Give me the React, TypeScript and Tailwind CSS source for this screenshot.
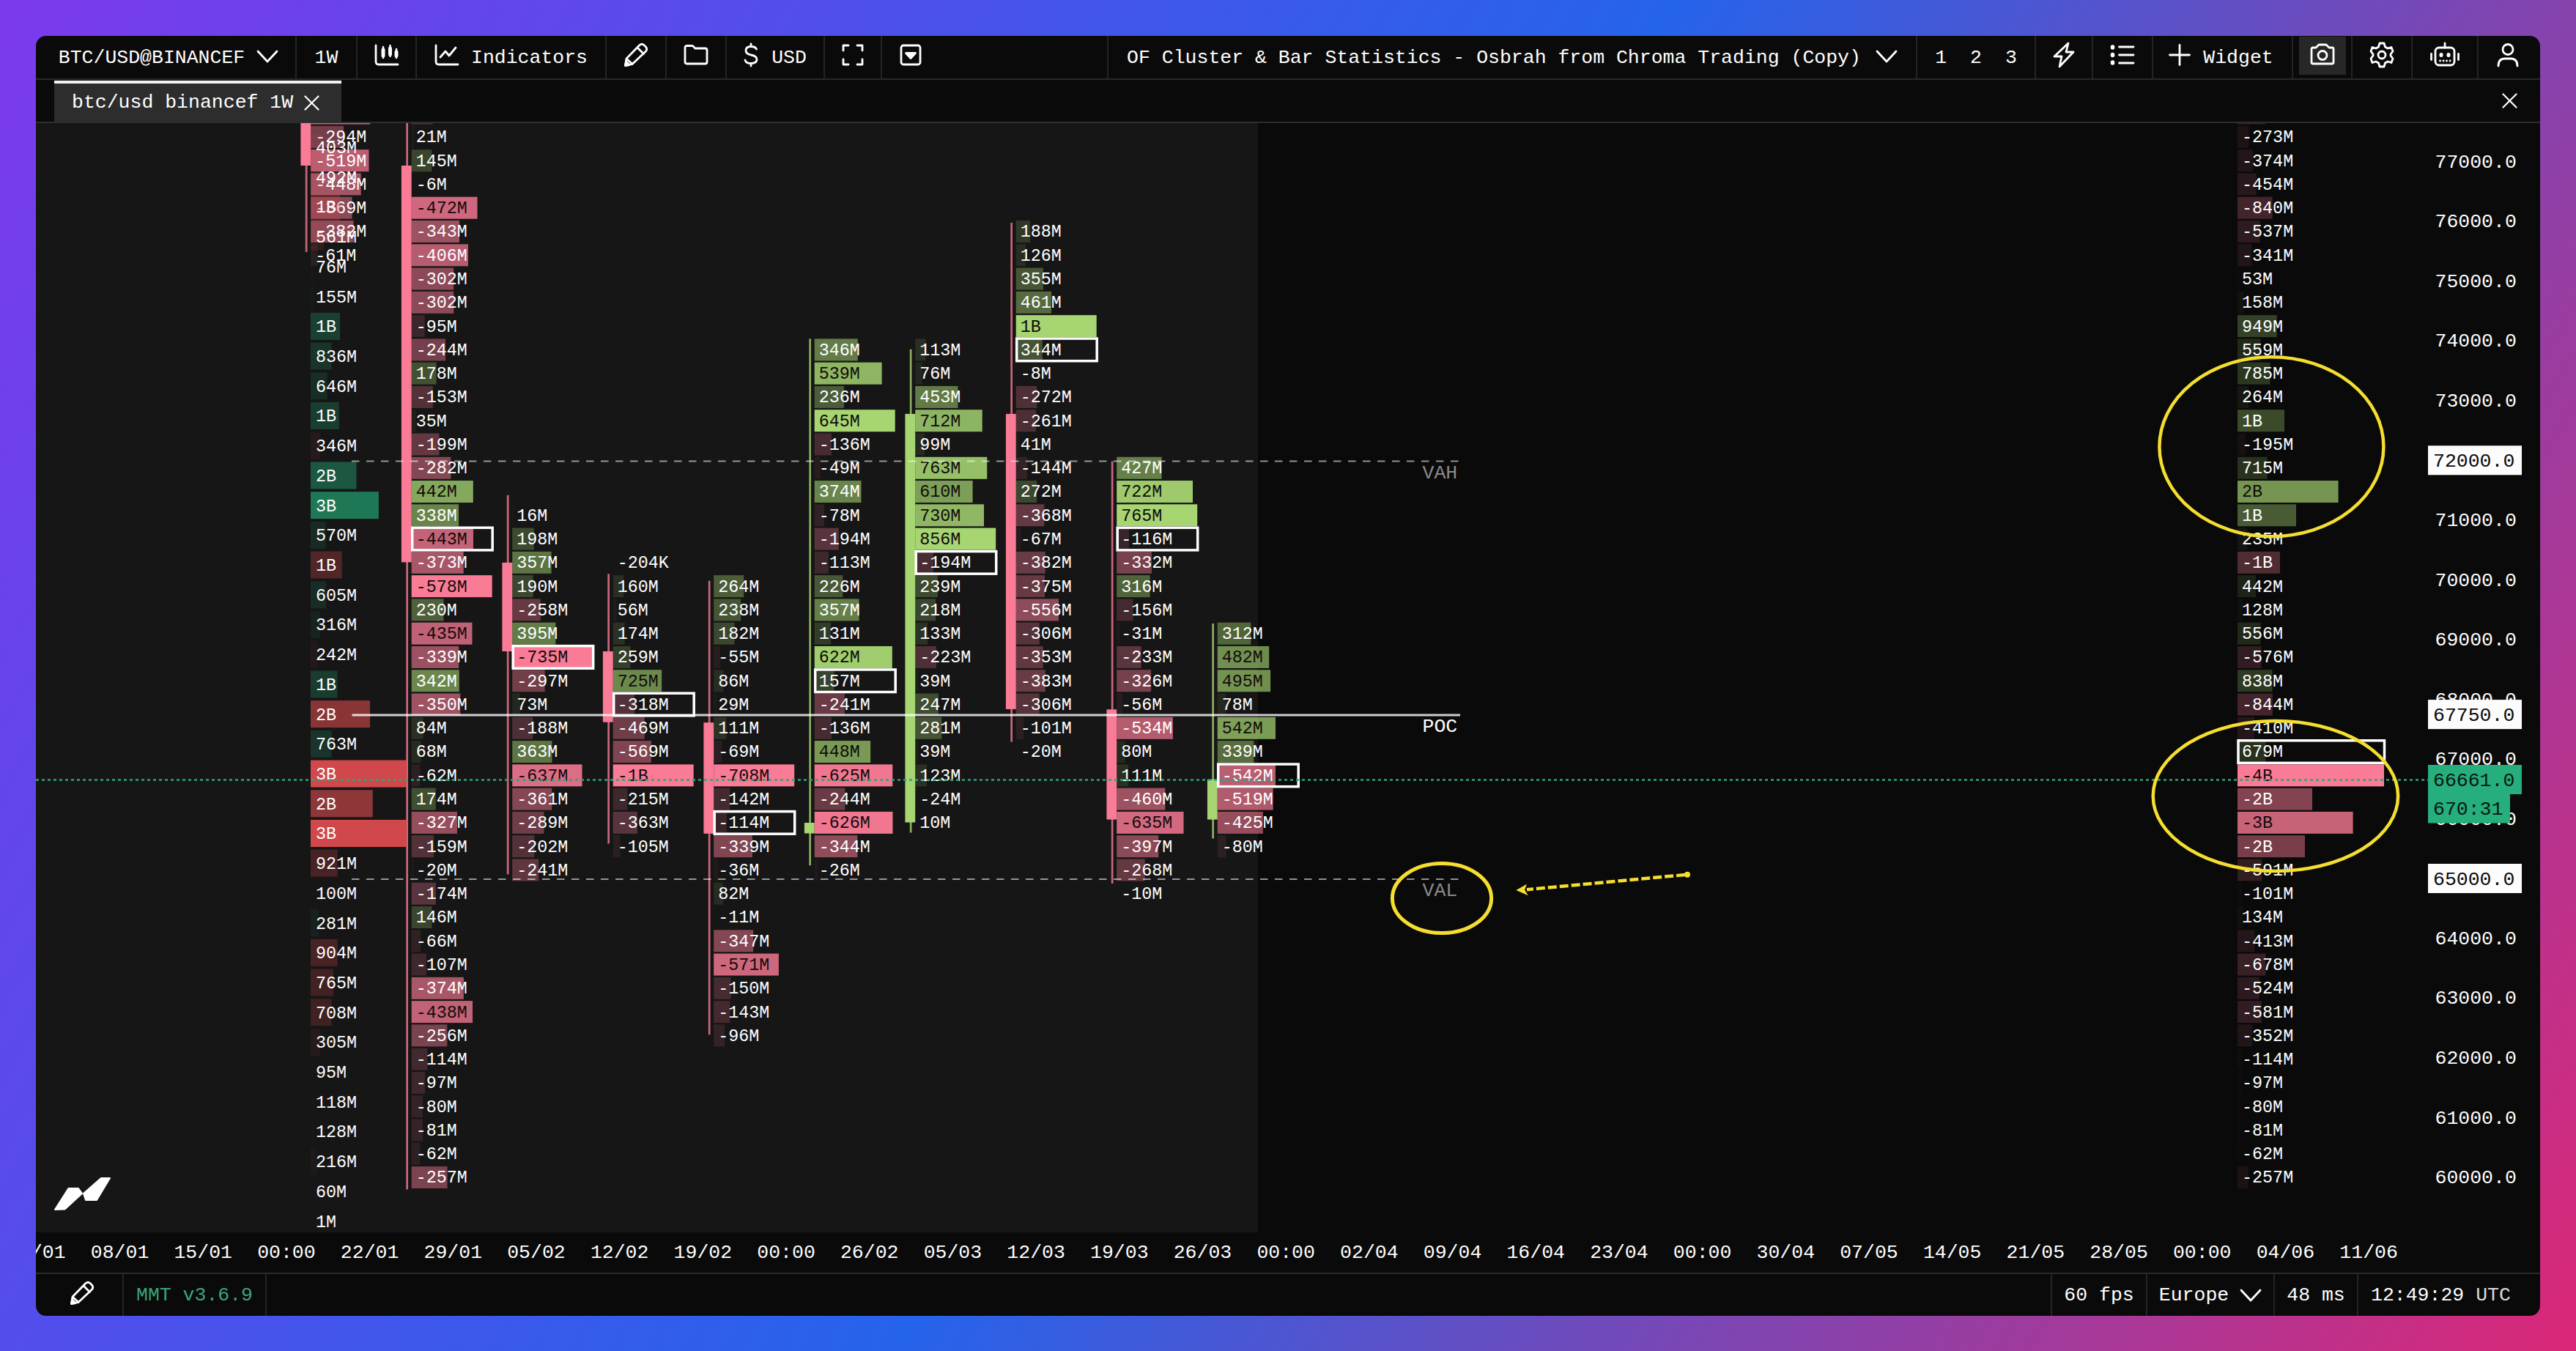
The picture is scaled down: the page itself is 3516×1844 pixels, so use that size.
import type { ReactNode } from 'react'
import clsx from 'clsx'

type Row = [label: string, ratio: number]

interface Cluster {
  x: number
  start: number
  max: number
  poc?: number
  width?: number
  bull?: boolean
  body?: [number, number]
  wick?: [number, number]
  values: string
}

const CHART_TOP = 168
const ROW_HEIGHT = 32.276
const FIRST_ROW = 186.8
const PINK = '#f97b95'
const GREEN = '#a6d572'

const CLUSTERS: Cluster[] = [
  {
    x: 424.2, start: -1, max: 720, body: [150, 226], wick: [150, 344],
    values: '-530M -294M -519M -448M -369M -382M -61M',
  },
  {
    x: 561.7, start: -1, max: 578, poc: 17, body: [226, 767.4], wick: [150, 1623.5],
    values:
      '-152M 21M 145M -6M -472M -343M -406M -302M -302M -95M -244M 178M -153M 35M -199M -282M 442M 338M -443M -373M -578M 230M -435M -339M 342M -350M 84M 68M -62M 174M -327M -159M -20M -174M 146M -66M -107M -374M -438M -256M -114M -97M -80M -81M -62M -257M',
  },
  {
    x: 699.2, start: 16, max: 735, poc: 22, body: [767.9, 889], wick: [675.8, 1193.4],
    values: '16M 198M 357M 190M -258M 395M -735M -297M 73M -188M 363M -637M -361M -289M -202M -241M',
  },
  {
    x: 836.7, start: 18, max: 1200, poc: 24, body: [889, 985.7], wick: [783.4, 1151.5],
    values: '-204K 160M 56M 174M 259M 725M -318M -469M -569M -1B:1 -215M -363M -105M',
  },
  {
    x: 974.2, start: 19, max: 708, poc: 29, body: [986.2, 1137.8], wick: [792.6, 1412.2],
    values:
      '264M 238M 182M -55M 86M 29M 111M -69M -708M -142M -114M -339M -36M 82M -11M -347M -571M -150M -143M -96M',
  },
  {
    x: 1111.7, start: 9, max: 645, poc: 23, bull: true, body: [1123, 1137.5], wick: [462.4, 1181.2],
    values:
      '346M 539M 236M 645M -136M -49M 374M -78M -194M -113M 226M 357M 131M 622M 157M -241M -136M 448M -625M -244M -626M -344M -26M',
  },
  {
    x: 1249.2, start: 9, max: 856, poc: 18, bull: true, body: [564.9, 1122.5], wick: [476.8, 1136.5],
    values:
      '113M 76M 453M 712M 99M 763M 610M 730M 856M -194M 239M 218M 133M -223M 39M 247M 281M 39M 123M -24M 10M',
  },
  {
    x: 1386.7, start: 4, max: 1050, poc: 9, body: [564.9, 967.9], wick: [304, 1012.6],
    values:
      '188M 126M 355M 461M 1B:1 344M -8M -272M -261M 41M -144M 272M -368M -67M -382M -375M -556M -306M -353M -383M -306M -101M -20M',
  },
  {
    x: 1524.2, start: 14, max: 765, poc: 17, body: [968.3, 1118.6], wick: [629.5, 1206],
    values:
      '427M 722M 765M -116M -332M 316M -156M -31M -233M -326M -56M -534M 80M 111M -460M -635M -397M -268M -10M',
  },
  {
    x: 1661.7, start: 21, max: 752, poc: 27, bull: true, body: [1063.9, 1118.6], wick: [851, 1144.5],
    values: '312M 482M 495M 78M 542M 339M -542M -519M -425M -80M',
  },
  {
    x: 3054, start: -1, max: 3530, poc: 26, width: 200,
    values:
      '-670M -273M -374M -454M -840M -537M -341M 53M 158M 949M 559M 785M 264M 1B:0.32 -195M 715M 2B:0.688 1B:0.4 235M -1B:0.29 442M 128M 556M -576M 838M -844M -410M 679M -4B:1 -2B:0.51 -3B:0.788 -2B:0.46 -591M -101M 134M -413M -678M -524M -581M -352M -114M -97M -80M -81M -62M -257M',
  },
]

// label, bar width, rising
const PROFILE: [string, number, boolean][] = [
  ['403M', 16, false], ['492M', 18, false], ['1B', 40, false], ['561M', 18, false], ['76M', 3, true],
  ['155M', 4, true], ['1B', 40, true], ['836M', 28.5, true], ['646M', 22.5, true], ['1B', 38.7, true],
  ['346M', 13.4, false], ['2B', 62.5, true], ['3B', 92.9, true], ['570M', 20.5, true], ['1B', 42.7, false],
  ['605M', 21, true], ['316M', 13, true], ['242M', 9, false], ['1B', 36.5, true], ['2B', 81, false],
  ['763M', 28.6, true], ['3B', 131, false], ['2B', 84.7, false], ['3B', 131, false], ['921M', 36.7, false],
  ['100M', 2, false], ['281M', 11, true], ['904M', 36.7, false], ['765M', 31, false], ['708M', 28.6, false],
  ['305M', 12.8, false], ['95M', 3, false], ['118M', 3, false], ['128M', 3, false], ['216M', 8, false],
  ['60M', 1, false], ['1M', 0, false],
]

const DATES = [
  '01/01', '08/01', '15/01', '00:00', '22/01', '29/01', '05/02', '12/02', '19/02', '00:00', '26/02',
  '05/03', '12/03', '19/03', '26/03', '00:00', '02/04', '09/04', '16/04', '23/04', '00:00', '30/04',
  '07/05', '14/05', '21/05', '28/05', '00:00', '04/06', '11/06',
]

function parseRow(raw: string, max: number): Row {
  const [label, ratio] = raw.split(':')
  if (ratio) return [label, Number(ratio)]
  const scale = label.endsWith('K') ? 0.001 : 1
  return [label, Math.min(1, (Math.abs(parseFloat(label)) * scale) / max)]
}

function ClusterColumn({ cluster }: { cluster: Cluster }) {
  const { x, start, max, poc, width = 110, bull, body, wick, values } = cluster
  const candle = bull ? GREEN : PINK

  return (
    <g>
      {wick && (
        <rect x={x - 7.4} y={wick[0]} width={2.7} height={wick[1] - wick[0]} fill={candle} opacity={0.8} />
      )}
      {body && <rect x={x - 13.8} y={body[0]} width={13.8} height={body[1] - body[0]} fill={candle} />}
      {values.split(' ').map((raw, i) => {
        const [label, ratio] = parseRow(raw, max)
        const y = FIRST_ROW + (start + i) * ROW_HEIGHT
        const negative = label.startsWith('-')
        const dark = ratio > (negative ? 0.74 : 0.6)
        return (
          <g key={i}>
            <rect
              x={x}
              y={y - 14.9}
              width={width * ratio}
              height={30}
              fill={negative ? PINK : GREEN}
              opacity={ratio}
            />
            {y > CHART_TOP && (
              <text x={x + 6} y={y + 7.5} className={dark ? 'fill-[#120b0c]' : 'fill-white'}>
                {label}
              </text>
            )}
          </g>
        )
      })}
      {poc !== undefined && (
        <rect
          x={x + 1}
          y={FIRST_ROW + poc * ROW_HEIGHT - 15.2}
          width={width - 0.5}
          height={30.6}
          className="fill-none stroke-white stroke-[3.5]"
        />
      )}
    </g>
  )
}

function VolumeProfile() {
  return (
    <g>
      {PROFILE.map(([label, width, up], i) => {
        const y = 404.8 + (i - 5) * 40.71
        return (
          <g key={i}>
            <rect
              x={424}
              y={y - 18.6}
              width={width}
              height={37}
              fill={up ? '#23a070' : '#d0484b'}
              opacity={Math.min(1, width / 131)}
            />
            <text x={431} y={y + 7.8} className="fill-white">
              {label}
            </text>
          </g>
        )
      })}
    </g>
  )
}

function PriceTag({ y, label, live, width = 128 }: { y: number; label: string; live?: boolean; width?: number }) {
  return (
    <g>
      <rect x={3314} y={y - 20} width={width} height={40} className={live ? 'fill-[#27ae7d]' : 'fill-[#fcfcfc]'} />
      <text x={3321} y={y + 8.5} className={live ? 'fill-[#08170f]' : 'fill-[#0a0a0a]'}>
        {label}
      </text>
    </g>
  )
}

function Chart() {
  const prices = Array.from({ length: 18 }, (_, i) => 77000 - i * 1000)

  return (
    <svg
      viewBox="49 168 3418 1514"
      className="block h-[1514px] w-full shrink-0 text-[23.4px]"
      fontFamily="'Liberation Mono', monospace"
    >
      <rect x={49} y={CHART_TOP} width={1668} height={1514} className="fill-[#161616]" />
      {CLUSTERS.map((cluster) => (
        <ClusterColumn key={cluster.x} cluster={cluster} />
      ))}
      <VolumeProfile />

      {/* value area */}
      <path d="M480 629.5H1991M480 1200H1991" strokeDasharray="10.5 9.5" className="stroke-white/55 stroke-2" />
      <path d="M480.5 976H1993" className="stroke-white/80 stroke-3" />
      <g className="fill-[#8a8a8a] text-[26.5px]">
        <text x={1941.5} y={653}>VAH</text>
        <text x={1941.5} y={999} className="fill-white">POC</text>
        <text x={1941.5} y={1223}>VAL</text>
      </g>
      <path d="M49 1064.5H3314" strokeDasharray="4 4" className="stroke-[#2aa57b] stroke-[2.5]" />

      {/* price axis */}
      <g className="text-[26.5px]">
        {prices.map((price, i) => (
          <text key={price} x={3323.5} y={219.9 + i * 81.55 + 8.8} className="fill-white">
            {price}.0
          </text>
        ))}
        <PriceTag y={628.3} label="72000.0" />
        <PriceTag y={975.1} label="67750.0" />
        <PriceTag y={1199} label="65000.0" />
        <PriceTag y={1064} label="66661.0" live />
        <PriceTag y={1103.5} label="670:31" live width={112} />
      </g>

      {/* drawings */}
      <g className="fill-none stroke-[#f5de2f] stroke-[4.5]">
        <ellipse cx={3100.4} cy={609.7} rx={153} ry={122.5} />
        <ellipse cx={3105.9} cy={1086.5} rx={167.2} ry={102.5} />
        <ellipse cx={1968} cy={1226} rx={67.6} ry={47.6} className="stroke-5" />
        <path d="M2300 1194L2084 1214.2" strokeDasharray="12 4" />
        <circle cx={2303} cy={1193.7} r={4} className="fill-[#f5de2f] stroke-none" />
        <path d="M2069.3 1215L2084 1206.7L2081 1214.6L2085.7 1222.3Z" className="fill-[#f5de2f] stroke-none" />
      </g>

      {/* logo */}
      <path
        d="M75 1651L88.5 1650.5L112 1629L107 1622H93.5ZM138 1608H150L132 1638H117L114 1629Z"
        strokeLinejoin="round"
        className="fill-white stroke-white stroke-2"
      />
    </svg>
  )
}

function Icon({ w, h, className, children }: { w: number; h: number; className?: string; children: ReactNode }) {
  return (
    <svg
      width={w}
      height={h}
      viewBox={`0 0 ${w} ${h}`}
      fill="none"
      stroke="currentColor"
      strokeWidth={2.8}
      strokeLinecap="round"
      strokeLinejoin="round"
      className={clsx('shrink-0', className)}
    >
      {children}
    </svg>
  )
}

function Chevron() {
  return (
    <Icon w={30} h={18} className="mt-1">
      <path d="M2 2L15 16L28 2" />
    </Icon>
  )
}

function Pencil() {
  return (
    <Icon w={34} h={34}>
      <path d="M2.5 31.5L4 22L22 3.5Q25 1 28 3.5L30.5 6Q33 9 30.5 12L12 29.5ZM19 7L27.5 15.5M4 22L12 29.5" />
      <path d="M2.5 31.5L3.5 26L8 30.5Z" fill="currentColor" />
    </Icon>
  )
}

function Close() {
  return (
    <Icon w={21} h={21}>
      <path d="M1.5 1.5L19.5 19.5M19.5 1.5L1.5 19.5" strokeWidth={2.2} />
    </Icon>
  )
}

function Cell({ className, children }: { className?: string; children: ReactNode }) {
  return (
    <div className={clsx('flex h-full shrink-0 items-center justify-center border-r-2 border-[#242424]', className)}>
      {children}
    </div>
  )
}

function Toolbar() {
  return (
    <header className="flex h-[60px] shrink-0 border-b-2 border-[#2a2a2a]">
      <Cell className="w-[356px] gap-4 pb-1.5 pl-2">
        <span className="pt-2">BTC/USD@BINANCEF</span>
        <Chevron />
      </Cell>
      <Cell className="w-[83px] pb-1.5">
        <span className="pt-2">1W</span>
      </Cell>
      <Cell className="w-[81px] pb-1.5">
        <Icon w={34} h={30}>
          <path d="M2 2V24Q2 28 6 28H32" />
          <path d="M12 4V19M21.5 2V17M30 7V19" strokeWidth={2.5} />
          <path d="M12 8V16M21.5 6V14M30 11V16" strokeWidth={5} />
        </Icon>
      </Cell>
      <Cell className="w-[259px] gap-4 pb-1.5">
        <Icon w={34} h={30}>
          <path d="M2 2V24Q2 28 6 28H32M8 18L15 10L20 16L29 5" />
        </Icon>
        <span className="pt-2">Indicators</span>
      </Cell>
      <Cell className="w-[82px] pb-1.5">
        <Pencil />
      </Cell>
      <Cell className="w-[82px] pb-1.5">
        <Icon w={34} h={28}>
          <path d="M2 4Q2 1.5 4.5 1.5H11Q13 1.5 14 3L15.5 5H29.5Q32 5 32 7.500V23.5Q32 26 29.5 26H4.5Q2 26 2 23.5Z" />
        </Icon>
      </Cell>
      <Cell className="w-[134px] gap-[18px] pb-1.5">
        <Icon w={20} h={34}>
          <path d="M10 2V5.5M10 28.5V32M17.5 9Q16 5.5 10 5.5Q3 5.5 3 11Q3 15.5 10 17Q18 18.5 18 23Q18 28.5 10 28.5Q3 28.5 2 24" />
        </Icon>
        <span className="pt-2">USD</span>
      </Cell>
      <Cell className="w-[78px] pb-1.5">
        <Icon w={30} h={30}>
          <path d="M2 9V2H9M21 2H28V9M28 21V28H21M9 28H2V21" />
        </Icon>
      </Cell>
      <div className="flex items-center pb-1.5 pl-6">
        <Icon w={30} h={30}>
          <rect x={2} y={2} width={26} height={26} rx={3} />
          <path d="M8.5 12.5H21.5L15 19.5Z" fill="currentColor" />
        </Icon>
      </div>

      <div className="flex-1 border-r-2 border-[#242424]" />
      <Cell className="w-[1104px] gap-5 pb-1.5">
        <span className="pt-2">OF Cluster &amp; Bar Statistics - Osbrah from Chroma Trading (Copy)</span>
        <Chevron />
      </Cell>
      <Cell className="w-[162px] gap-8 pb-1.5">
        <span className="pt-2">1</span>
        <span className="pt-2">2</span>
        <span className="pt-2">3</span>
      </Cell>
      <Cell className="w-[78px] pb-1.5">
        <Icon w={30} h={36}>
          <path d="M21 2L2 20H12L9 34L28 14H18Z" />
        </Icon>
      </Cell>
      <Cell className="w-[82px] pb-1.5">
        <Icon w={34} h={28}>
          <path d="M12.5 3H32M12.5 14H32M12.5 25H32" />
          <path d="M3.5 3V4M3.5 13.5V14.5M3.5 24V25" strokeWidth={5.5} />
        </Icon>
      </Cell>
      <Cell className="w-[191px] gap-[17px] pr-1 pb-1.5">
        <Icon w={30} h={30}>
          <path d="M15 1.5V28.5M1.5 15H28.5" />
        </Icon>
        <span className="pt-2">Widget</span>
      </Cell>
      <Cell className="w-[81px] pb-1">
        <div className="flex h-[52px] w-16 items-center justify-center bg-[#272727] pb-1">
          <Icon w={34} h={30}>
            <path d="M2 8Q2 6 4 6H8L12 2H22L26 6H30Q32 6 32 8V26Q32 28 30 28H4Q2 28 2 26Z" />
            <circle cx={17} cy={16.5} r={6} />
          </Icon>
        </div>
      </Cell>
      <Cell className="w-[82px] pb-1.5">
        <Icon w={34} h={36}>
          <path d="M14 2H20L21.5 7L25 9L30 7.5L32 13L29 17L29 19L32 23L30 28.5L25 27L21.5 29L20 34H14L12.5 29L9 27L4 28.5L2 23L5 19V17L2 13L4 7.5L9 9L12.5 7Z" />
          <circle cx={17} cy={18} r={5} />
        </Icon>
      </Cell>
      <Cell className="w-[90px] pb-2">
        <Icon w={42} h={34}>
          <path d="M21 2V8M2.5 16.5V24.5M39.5 16.5V24.5" />
          <rect x={8} y={8} width={26} height={24} rx={5} />
          <path d="M16 17.5V18.5M26 17.5V18.5" strokeWidth={5} />
          <path d="M14.5 26H14.6M19 26H19.1M23.5 26H23.6M28 26H28.1" />
        </Icon>
      </Cell>
      <div className="flex w-[84px] items-center justify-center pr-1 pb-1.5">
        <Icon w={30} h={34}>
          <circle cx={15} cy={9.5} r={7} />
          <path d="M2 32Q2 22 11 22H19Q28 22 28 32" />
        </Icon>
      </div>
    </header>
  )
}

function TabBar() {
  return (
    <div className="flex h-[59px] shrink-0 items-start justify-between border-b-2 border-[#2e2e2e] pr-[31px] pl-[25px]">
      <div className="mt-px flex h-14 w-[392px] items-center gap-[15px] border-t-4 border-[#f2f2f2] bg-[#2d2d2d] pl-6">
        <span>btc/usd binancef 1W</span>
        <Close />
      </div>
      <div className="flex h-full items-center">
        <Close />
      </div>
    </div>
  )
}

function StatusBar() {
  return (
    <footer className="flex h-[59px] shrink-0 border-t-2 border-[#2a2a2a]">
      <Cell className="w-[120px] pb-1.5 pl-2">
        <Pencil />
      </Cell>
      <Cell className="w-[195px] text-[#3aa57c]">MMT v3.6.9</Cell>
      <div className="flex-1 border-r-2 border-[#242424]" />
      <Cell className="w-[130px]">60 fps</Cell>
      <Cell className="w-[174px] gap-[15px]">
        <span>Europe</span>
        <Icon w={30} h={18}>
          <path d="M2 2L15 16L28 2" />
        </Icon>
      </Cell>
      <Cell className="w-[114px]">48 ms</Cell>
      <div className="flex w-[248px] items-center pl-[17px]">
        <span>
          12:49:29 <span className="text-[#dcdcdc]">UTC</span>
        </span>
      </div>
    </footer>
  )
}

export default function App() {
  return (
    <div className="h-[1844px] w-[3516px] bg-[linear-gradient(120deg,#7c3aed_0%,#2563eb_50%,#db2777_100%)] p-[49px]">
      <main className="flex h-[1747px] flex-col overflow-hidden rounded-[14px] bg-[#0a0a0a] font-['Liberation_Mono',monospace] text-[26.5px] leading-8 whitespace-pre text-white">
        <Toolbar />
        <TabBar />
        <Chart />
        <div className="flex h-[55px] shrink-0 items-center overflow-hidden">
          <div className="-ml-14 flex">
            {DATES.map((date, i) => (
              <span key={i} className="w-[113.7px] shrink-0 text-center">
                {date}
              </span>
            ))}
          </div>
        </div>
        <StatusBar />
      </main>
    </div>
  )
}
